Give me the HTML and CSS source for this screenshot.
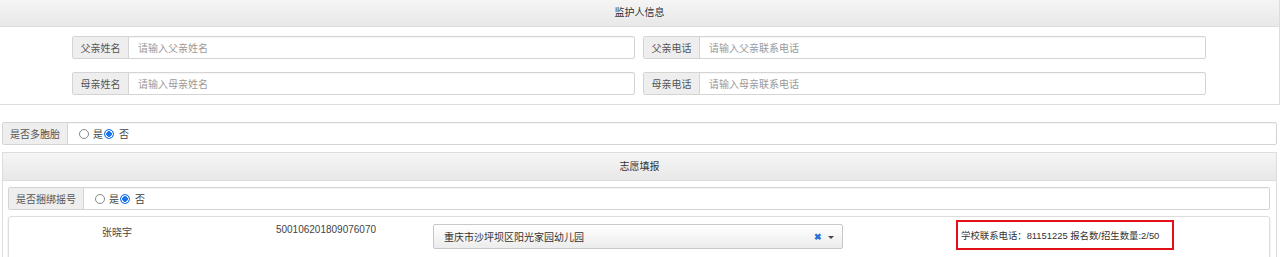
FILE: index.html
```html
<!DOCTYPE html>
<html lang="zh-CN">
<head>
    <meta charset="UTF-8">
    <title>监护人信息</title>
    <link rel="stylesheet" href="styles.css">
</head>
<body>

    <div class="panel panel-top">
        <div class="panel-heading">监护人信息</div>
        <div class="guardian-body">
            <div class="form-row">
                <div class="input-group">
                    <span class="addon">父亲姓名</span>
                    <span class="field">请输入父亲姓名</span>
                </div>
                <div class="input-group">
                    <span class="addon">父亲电话</span>
                    <span class="field">请输入父亲联系电话</span>
                </div>
            </div>
            <div class="form-row">
                <div class="input-group">
                    <span class="addon">母亲姓名</span>
                    <span class="field">请输入母亲姓名</span>
                </div>
                <div class="input-group">
                    <span class="addon">母亲电话</span>
                    <span class="field">请输入母亲联系电话</span>
                </div>
            </div>
        </div>
    </div>

    <!-- 是否多胞胎 -->
    <div class="input-group radio-group twins">
        <span class="addon addon-twins">是否多胞胎</span>
        <span class="radio-field">
            <span class="radio"></span><span class="radio-label">是</span>
            <span class="radio checked"></span><span class="radio-label">否</span>
        </span>
    </div>

    <div class="panel panel-wish">
        <div class="panel-heading heading-wish">志愿填报</div>
        <div class="wish-body">
            <div class="input-group radio-group">
                <span class="addon addon-bind">是否捆绑摇号</span>
                <span class="radio-field">
                    <span class="radio"></span><span class="radio-label">是</span>
                    <span class="radio checked"></span><span class="radio-label">否</span>
                </span>
            </div>

            <div class="student-card">
                <div class="cell cell-name">张晓宇</div>
                <div class="cell cell-id">500106201809076070</div>
                <div class="cell cell-school">
                    <div class="select">
                        <span class="select-text">重庆市沙坪坝区阳光家园幼儿园</span>
                        <span class="select-clear">✖</span>
                        <span class="select-caret"></span>
                    </div>
                </div>
                <div class="cell cell-info">
                    <div class="info-box">学校联系电话：81151225 报名数/招生数量:2/50</div>
                </div>
            </div>
        </div>
    </div>

</body>
</html>
```

FILE: styles.css
```css
body {
    margin: 0;
    width: 1280px;
    font-family: "Liberation Sans", "Noto Sans CJK SC", sans-serif;
    font-size: 10px;
    color: #333;
    background: #fff;
}

.panel {
    border: 1px solid #ddd;
    background: #fff;
}

.panel-top {
    border-top: 0;
    border-left: 0;
    width: 1279px;
}

.panel-heading {
    height: 26px;
    line-height: 26px;
    text-align: center;
    background: linear-gradient(#f5f5f5, #e8e8e8);
    border-bottom: 1px solid #ddd;
    color: #333;
}

.guardian-body {
    padding: 9px 0 9px 0;
    display: flex;
    flex-direction: column;
    gap: 13px;
}

.form-row {
    display: flex;
    gap: 8px;
    padding: 0 73px 0 72px;
}

.form-row .input-group {
    flex: 1;
}

.input-group {
    display: flex;
    height: 23px;
    box-sizing: border-box;
    border: 1px solid #d4d4d4;
    border-radius: 2px;
    background: #fff;
    box-shadow: inset 0 1px 1px rgba(0, 0, 0, 0.04);
}

.addon {
    display: flex;
    align-items: center;
    justify-content: center;
    width: 55px;
    background: #eee;
    border-right: 1px solid #d4d4d4;
    color: #555;
    flex-shrink: 0;
}

.field {
    display: flex;
    align-items: center;
    padding-left: 9px;
    color: #9a9a9a;
}

/* 单选行 */
.twins {
    margin: 17px 3px 0 2px;
}

.addon-twins {
    width: 64px;
}

.addon-bind {
    width: 74px;
}

.radio-field {
    display: flex;
    align-items: center;
    padding-left: 11px;
    color: #444;
}

.radio {
    width: 8px;
    height: 8px;
    border: 1px solid #888;
    border-radius: 50%;
    box-sizing: content-box;
    margin-right: 4px;
    background: #fff;
}

.radio.checked {
    border-color: #1a73e8;
    background: radial-gradient(circle, #1a73e8 0 2.6px, #fff 3px 3.6px, #1a73e8 4px);
    margin-left: 1px;
    margin-right: 5px;
}

/* 志愿填报 */
.panel-wish {
    margin: 7px 3px 0 2px;
}

.heading-wish {
    height: 27px;
    line-height: 27px;
}

.wish-body {
    padding: 6px 6px 0 5px;
    display: flex;
    flex-direction: column;
    gap: 6px;
}

.student-card {
    display: grid;
    grid-template-columns: 216px 202px 424px 1fr;
    height: 44px;
    border: 1px solid #ddd;
    border-radius: 3px;
    box-shadow: 0 1px 2px rgba(0, 0, 0, 0.15);
    color: #444;
}

.cell-name,
.cell-id {
    text-align: center;
    padding-top: 7px;
}

.cell-school {
    padding: 7px 0 0 6px;
}

.select {
    display: flex;
    align-items: center;
    width: 410px;
    height: 25px;
    box-sizing: border-box;
    border: 1px solid #c8c8c8;
    border-radius: 2px;
    background: linear-gradient(#fff, #ececec);
    padding: 0 8px 0 10px;
    color: #333;
}

.select-text {
    flex: 1;
}

.select-clear {
    color: #2a6fd1;
    font-size: 9px;
    font-weight: bold;
    margin-right: 6px;
}

.select-caret {
    width: 0;
    height: 0;
    border-left: 3px solid transparent;
    border-right: 3px solid transparent;
    border-top: 3px solid #444;
    margin-top: 2px;
}

.cell-info {
    padding: 3px 0 0 105px;
}

.info-box {
    display: inline-block;
    width: 218px;
    height: 30px;
    box-sizing: border-box;
    border: 2px solid #e3101b;
    padding: 6px 0 0 3px;
    color: #333;
    font-size: 9.4px;
    white-space: nowrap;
}
```
